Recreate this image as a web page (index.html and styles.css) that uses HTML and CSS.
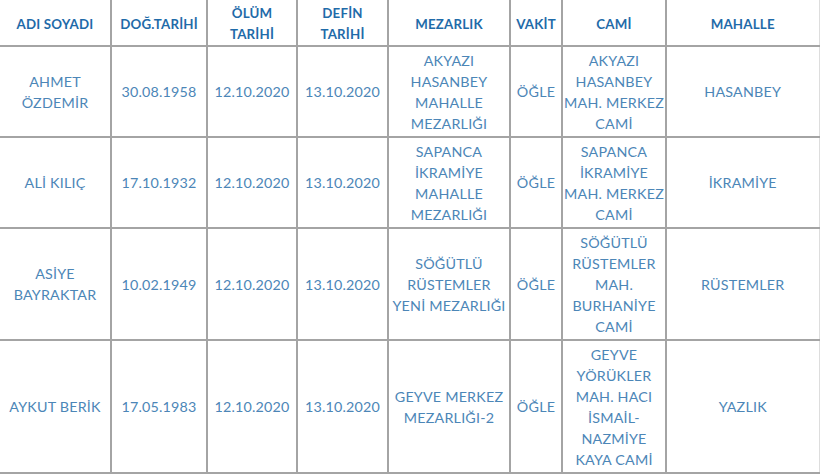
FILE: index.html
```html
<!DOCTYPE html>
<html lang="tr">
<head>
<meta charset="utf-8">
<title>Vefat Listesi</title>
<link rel="stylesheet" href="styles.css">
</head>
<body>
<table class="list">
  <colgroup>
    <col class="c-name"><col class="c-dob"><col class="c-dod"><col class="c-bur">
    <col class="c-cem"><col class="c-time"><col class="c-mosque"><col class="c-dist">
  </colgroup>
  <thead>
    <tr>
      <th>ADI SOYADI</th><th>DOĞ.TARİHİ</th><th>ÖLÜM TARİHİ</th><th>DEFİN TARİHİ</th>
      <th>MEZARLIK</th><th>VAKİT</th><th>CAMİ</th><th>MAHALLE</th>
    </tr>
  </thead>
  <tbody>
    <tr>
      <td>AHMET ÖZDEMİR</td><td>30.08.1958</td><td>12.10.2020</td><td>13.10.2020</td>
      <td>AKYAZI HASANBEY MAHALLE MEZARLIĞI</td><td>ÖĞLE</td><td>AKYAZI HASANBEY MAH. MERKEZ CAMİ</td><td>HASANBEY</td>
    </tr>
    <tr>
      <td>ALİ KILIÇ</td><td>17.10.1932</td><td>12.10.2020</td><td>13.10.2020</td>
      <td>SAPANCA İKRAMİYE MAHALLE MEZARLIĞI</td><td>ÖĞLE</td><td>SAPANCA İKRAMİYE MAH. MERKEZ CAMİ</td><td>İKRAMİYE</td>
    </tr>
    <tr>
      <td>ASİYE BAYRAKTAR</td><td>10.02.1949</td><td>12.10.2020</td><td>13.10.2020</td>
      <td>SÖĞÜTLÜ RÜSTEMLER YENİ MEZARLIĞI</td><td>ÖĞLE</td><td>SÖĞÜTLÜ RÜSTEMLER MAH. BURHANİYE CAMİ</td><td>RÜSTEMLER</td>
    </tr>
    <tr>
      <td>AYKUT BERİK</td><td>17.05.1983</td><td>12.10.2020</td><td>13.10.2020</td>
      <td>GEYVE MERKEZ MEZARLIĞI-2</td><td>ÖĞLE</td><td>GEYVE YÖRÜKLER MAH. HACI İSMAİL-NAZMİYE KAYA CAMİ</td><td>YAZLIK</td>
    </tr>
  </tbody>
</table>
</body>
</html>
```
FILE: styles.css
```css
html, body {
  margin: 0;
  padding: 0;
  background: #ffffff;
}
.list {
  width: 819px;
  table-layout: fixed;
  border-collapse: collapse;
  font-family: "Lato", "Liberation Sans", sans-serif;
  font-size: 14.3px;
  line-height: 21px;
  color: #4c86b7;
  letter-spacing: 0.2px;
}
.c-name { width: 111px; }
.c-dob { width: 96px; }
.c-dod { width: 90px; }
.c-bur { width: 91px; }
.c-cem { width: 122px; }
.c-time { width: 52px; }
.c-mosque { width: 104px; }
.c-dist { width: 153px; }
.list th, .list td {
  border: 2px solid #a4a4a4;
  text-align: center;
  vertical-align: middle;
  padding: 2px 1px;
}
.list th {
  border-top: none;
  font-weight: 700;
  color: #1f6ba9;
  font-size: 13.3px;
  height: 38px;
  padding: 3px 1px 0;
}
.list tr > :first-child { border-left: none; }
.list tr > :last-child { border-right: 1px solid #dddddd; }
.list tbody tr:nth-child(1) td { height: 85px; }
.list tbody tr:nth-child(2) td { height: 85px; }
.list tbody tr:nth-child(3) td { height: 106px; }
.list tbody tr:nth-child(4) td { height: 127px; }
```
